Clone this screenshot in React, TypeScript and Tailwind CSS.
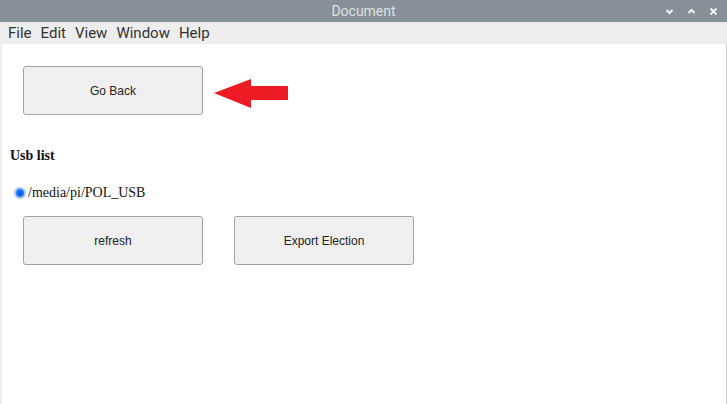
import { ReactNode } from "react";

function Btn({ children }: { children: ReactNode }) {
  return (
    <button className="w-[180px] h-[49px] rounded-[3px] border border-[#a3a3a3] bg-[#efefef] text-[12px] text-[#222] font-['Liberation_Sans',Arial,sans-serif]">
      {children}
    </button>
  );
}

export default function App() {
  return (
    <div className="w-[727px] h-[404px] bg-white flex flex-col overflow-hidden">
      {/* title bar */}
      <div className="relative h-[22px] bg-[#878f98] flex items-center justify-center font-['Roboto',sans-serif] text-[14px] text-[#dde0e4]">
        Document
        <div className="absolute right-[9px] top-0 h-full flex items-center gap-[13px] text-[#f4f5f6]">
          <svg width="9" height="9" viewBox="0 0 9 9">
            <path d="M1.5 3 L4.5 6 L7.5 3" stroke="currentColor" strokeWidth="2" fill="none" />
          </svg>
          <svg width="9" height="9" viewBox="0 0 9 9">
            <path d="M1.5 6 L4.5 3 L7.5 6" stroke="currentColor" strokeWidth="2" fill="none" />
          </svg>
          <svg width="9" height="9" viewBox="0 0 9 9">
            <path d="M1.5 1.5 L7.5 7.5 M7.5 1.5 L1.5 7.5" stroke="currentColor" strokeWidth="2" fill="none" />
          </svg>
        </div>
      </div>

      {/* menu bar */}
      <div className="h-[22px] bg-[#ededed] flex items-center gap-[9px] pl-[8px] font-['Roboto',sans-serif] text-[15px] text-[#333]">
        <span>File</span>
        <span>Edit</span>
        <span>View</span>
        <span>Window</span>
        <span>Help</span>
      </div>

      {/* document */}
      <div className="flex-1 border-l-2 border-r border-l-[#eeeeee] border-r-[#d0d0d0] pl-[8px] pt-[22px] font-['Liberation_Serif',serif] text-[#111]">
        <div className="flex items-center ml-[13px]">
          <Btn>Go Back</Btn>
          <svg className="ml-[11px] mt-[6px]" width="75" height="30" viewBox="0 0 75 30">
            <polygon points="0,14 37,0 37,7 74,7 74,21 37,21 37,29" fill="#ed1c24" />
          </svg>
        </div>

        <div className="mt-[33px] text-[14px] font-bold leading-[16px]">Usb list</div>

        <div className="mt-[21px] flex items-center gap-[2px] pl-[4px] text-[14px] leading-[16px]">
          <span className="w-[12px] h-[12px] rounded-full bg-[#2b7cf0] border-2 border-[#a9c9f7] flex items-center justify-center">
            <span className="w-[5px] h-[5px] rounded-full bg-[#0a5fe0]" />
          </span>
          <span>/media/pi/POL_USB</span>
        </div>

        <div className="mt-[15px] ml-[13px] flex gap-[31px]">
          <Btn>refresh</Btn>
          <Btn>Export Election</Btn>
        </div>
      </div>
    </div>
  );
}
